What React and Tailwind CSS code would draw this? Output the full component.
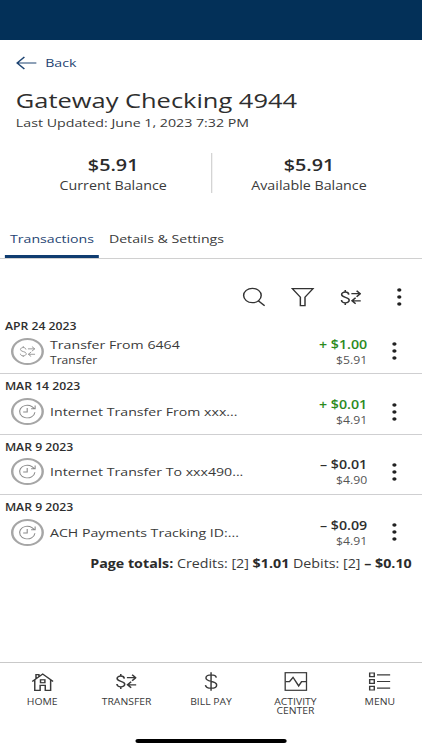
import clsx from 'clsx'

const transactions = [
  { id: 1, date: 'APR 24 2023', title: 'Transfer From 6464', sub: 'Transfer', amount: '+ $1.00', balance: '$5.91', icon: 'transfer' },
  { id: 2, date: 'MAR 14 2023', title: 'Internet Transfer From xxx...', amount: '+ $0.01', balance: '$4.91', icon: 'history' },
  { id: 3, date: 'MAR 9 2023', title: 'Internet Transfer To xxx490...', amount: '– $0.01', balance: '$4.90', icon: 'history' },
  { id: 4, date: 'MAR 9 2023', title: 'ACH Payments Tracking ID:...', amount: '– $0.09', balance: '$4.91', icon: 'history' },
]

// ── Icons ─────────────────────────────────────────────────────────────────────
function Icon({ className, viewBox = '0 0 20 20', width = 1.2, children }) {
  return (
    <svg className={className} viewBox={viewBox} fill="none" stroke="currentColor" strokeWidth={width}>
      {children}
    </svg>
  )
}

const BackIcon = () => (
  <Icon className="w-[17px] h-[14px]" viewBox="0 0 17 14">
    <path d="M17 7H1M7 1L1 7l6 6" />
  </Icon>
)

const SearchIcon = () => (
  <Icon className="size-5">
    <circle cx="8.9" cy="8.5" r="7.2" />
    <path d="M13.7 13.8l5.2 5" />
  </Icon>
)

const FilterIcon = () => (
  <Icon className="size-5">
    <path d="M1.6 1.6h17L12 10.2v8.4H8.2v-8.4z" />
  </Icon>
)

const TransferIcon = ({ className = 'w-[17px] h-[15px]', width = 1.3 }) => (
  <Icon className={className} viewBox="0 0 17 15" width={width}>
    <path d="M6.9 4.6C6.7 3 5.6 2 4 2S1 3 1 4.6C1 7.9 7.2 6.7 7.2 10c0 1.8-1.4 2.8-3.2 2.8S1 11.8.8 10M4 .1v2M4 12.8v2.1" />
    <path d="M9 3.7h7.3M13.3.7l3 3-3 3M16.7 10.8H9.5M12.5 7.8l-3 3 3 3" />
  </Icon>
)

const HistoryIcon = () => (
  <Icon className="size-[15px]" viewBox="0 0 15 15" width={0.9}>
    <path d="M13.6 8.2a6.3 6.3 0 1 1-2.4-5.6l2 1.9M13.8 1.5v3.3h-3.3M7.3 4v4H4" />
  </Icon>
)

const HomeIcon = () => (
  <Icon className="w-[18px] h-[18px]" viewBox="0 0 18 18" width={1.2}>
    <path d="M.4 8.5L9 1l8.6 7.5M2.5 7v10.3h4.4v-5h4.2v5h4.4V7M3.5 5.5V1.7h2.4v1.9" />
    <rect x="7.2" y="6.8" width="3.6" height="2.9" />
  </Icon>
)

const DollarIcon = () => (
  <Icon className="w-3 h-[19px]" viewBox="0 0 12 19">
    <path d="M10.3 5.6C10 3.8 8.3 2.8 6.1 2.8S1.8 3.9 1.8 5.9c0 4.3 8.8 2.6 8.8 7 0 2.1-2 3.3-4.5 3.3s-4.500-1.1-4.700-3.100M6 .3v18.4" />
  </Icon>
)

const ActivityIcon = () => (
  <Icon className="size-[19px]" viewBox="0 0 19 19">
    <rect x=".7" y=".7" width="17.6" height="17.6" />
    <path d="M1 9.6h3.3l2.9-4.3 4.6 8.6 2.4-4.3H18" />
  </Icon>
)

const MenuIcon = () => (
  <Icon className="w-[18px] h-[19px]" viewBox="0 0 18 19" width={1.2}>
    <path d="M1 1h3.8v3.6H1zM1 7.7h3.8v3.6H1zM1 14.4h3.8V18H1zM7 2.8h11M7 9.5h11M7 16.2h11" />
  </Icon>
)

const Kebab = () => (
  <button className="block text-[#222]" aria-label="More">
    <svg className="block h-[18px] w-4" viewBox="0 0 16 18" fill="currentColor">
      <circle cx="8.3" cy="2" r="1.75" />
      <circle cx="8.3" cy="9" r="1.75" />
      <circle cx="8.3" cy="16" r="1.75" />
    </svg>
  </button>
)

// ── Balances ──────────────────────────────────────────────────────────────────
function Balance({ amount, label }) {
  return (
    <div className="flex-1 pt-px text-center">
      <p className="text-[16.2px] leading-[22px] font-semibold text-[#2b2b2b]">{amount}</p>
      <p className="text-[11.7px] leading-[18px]">{label}</p>
    </div>
  )
}

// ── Transaction row ───────────────────────────────────────────────────────────
function Transaction({ tx }) {
  const credit = tx.amount.startsWith('+')
  return (
    <li className="h-[60.3px] border-b border-[#cfcfd1] px-1 pt-[5px] last:border-0">
      <p className="text-[10px] leading-[14px] font-semibold text-[#2e2e2e]">{tx.date}</p>
      <div className="flex h-[36px] items-center pt-[0.5px]">
        <span className="ml-[5px] flex size-[27px] shrink-0 items-center justify-center rounded-full border-2 border-[#a6a6a6] text-[#8a8a8a]">
          {tx.icon === 'transfer' ? <TransferIcon className="w-[13px] h-[11.5px]" width={1} /> : <HistoryIcon />}
        </span>
        <div className="ml-[5px] flex-1 whitespace-nowrap">
          <p className="text-[11.6px] leading-[17px]">{tx.title}</p>
          {tx.sub && <p className="text-[9.9px] leading-[14px]">{tx.sub}</p>}
        </div>
        <div className="text-right">
          <p className={clsx('text-[11.65px] leading-[17px] font-semibold', credit ? 'text-[#2b8a1d]' : 'text-[#2e2e2e]')}>
            {tx.amount}
          </p>
          <p className="text-[10px] leading-[14px] text-[#555]">{tx.balance}</p>
        </div>
        <div className="mr-[11px] ml-[14px]">
          <Kebab />
        </div>
      </div>
    </li>
  )
}

// ── Bottom navigation ─────────────────────────────────────────────────────────
const navItems = [
  { label: 'HOME', icon: <HomeIcon /> },
  { label: 'TRANSFER', icon: <TransferIcon /> },
  { label: 'BILL PAY', icon: <DollarIcon /> },
  { label: 'ACTIVITY CENTER', icon: <ActivityIcon /> },
  { label: 'MENU', icon: <MenuIcon /> },
]

function BottomNav() {
  return (
    <nav className="flex h-[77px] border-t border-[#c9c9c9] pt-[8px]">
      {navItems.map(({ label, icon }) => (
        <a key={label} href="#" className="flex w-1/5 flex-col items-center">
          <span className="flex h-[21px] items-center">{icon}</span>
          <span className="mt-[6px] px-3 text-center text-[8.5px] leading-[8.5px] font-medium">{label}</span>
        </a>
      ))}
    </nav>
  )
}

export default function App() {
  return (
    <div className="h-[750px] w-[422px] overflow-hidden bg-white">
      {/* wide aspect: everything is laid out at 346px and stretched sideways */}
      <div className="flex h-[750px] w-[346px] origin-top-left scale-x-[1.22] flex-col bg-white font-['Open_Sans',sans-serif] text-[#3a3a3a]">
        <div className="h-10 shrink-0 bg-[#033058]" />

        <header className="px-[13px] pt-[13px]">
          <a href="#" className="flex h-[20px] items-center gap-[7px] text-[11.65px] text-[#1f4573]">
            <BackIcon />
            Back
          </a>
          <h1 className="mt-[13px] text-[20.85px] leading-[29px] text-[#2e2e2e]">Gateway Checking 4944</h1>
          <p className="text-[11.65px] leading-[16px]">Last Updated: June 1, 2023 7:32 PM</p>
        </header>

        <section className="mt-[22px] flex h-10 pr-[13px] pl-[13px]">
          <Balance amount="$5.91" label="Current Balance" />
          <div className="w-px bg-[#d2d2d2]" />
          <Balance amount="$5.91" label="Available Balance" />
        </section>

        <div className="mt-[35px] flex h-[31px] gap-[4px] border-b border-[#d0d0d0] px-1 text-[11.6px] leading-[22px]">
          <button className="-mb-px h-[30px] border-b-[3px] border-[#0f3c70] px-[4.2px] pb-[5px] text-[#1f4573]">Transactions</button>
          <button className="h-[27px] px-1 pb-[5px]">Details &amp; Settings</button>
        </div>

        <div className="mt-[28px] flex h-5 items-center text-[#333]">
          <button className="ml-[198px]"><SearchIcon /></button>
          <button className="ml-[20px]"><FilterIcon /></button>
          <button className="ml-[20.5px]"><TransferIcon /></button>
          <div className="ml-[23.5px]"><Kebab /></div>
        </div>

        <ul className="mt-[7px]">
          {transactions.map(tx => <Transaction key={tx.id} tx={tx} />)}
        </ul>

        <p className="-mt-px pr-[8.5px] text-right text-[11.7px] leading-[18px] whitespace-nowrap">
          <b className="text-[#2b2b2b]">Page totals:</b> Credits: [2] <b className="text-[#2b2b2b]">$1.01</b> Debits: [2]{' '}
          <b className="text-[#2b2b2b]">– $0.10</b>
        </p>

        <div className="mt-auto">
          <BottomNav />
          <div className="mb-[7px] ml-[111px] h-[4px] w-[124px] rounded-full bg-black" />
        </div>
      </div>
    </div>
  )
}
